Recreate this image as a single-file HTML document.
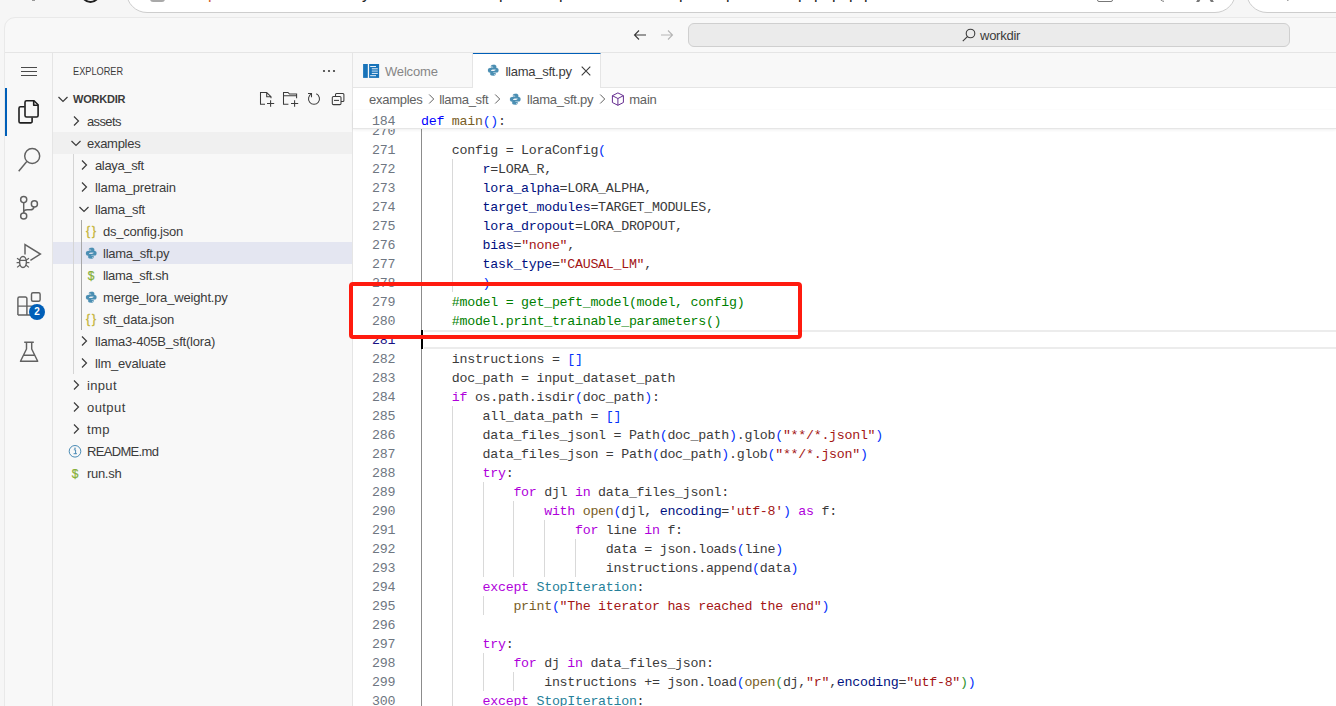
<!DOCTYPE html>
<html lang="en">
<head>
<meta charset="utf-8">
<title>llama_sft.py - workdir</title>
<style>
*{box-sizing:border-box}
html,body{margin:0;padding:0}
body{width:1336px;height:706px;overflow:hidden;position:relative;background:#f6f6f6;font-family:"Liberation Sans",sans-serif;font-size:13px;color:#3b3b3b}
.abs{position:absolute}
/* browser chrome remnants */
#chrome{position:absolute;left:0;top:0;width:1336px;height:16px;background:#f6f6f6;overflow:hidden}
#urlpill{position:absolute;left:126px;top:-30px;width:1110px;height:43px;border-radius:21px;background:#fff;border:1px solid #cdcdcd}
#pill2{position:absolute;left:1246px;top:-30px;width:140px;height:43px;border-radius:21px;background:#fff;border:1px solid #cdcdcd}
.urlfrag{position:absolute;top:-15.400px;font-size:16px;line-height:18px;color:#222;white-space:pre}
/* vscode window */
#win{position:absolute;left:4px;top:16.500px;width:1340px;height:700px;background:#f8f8f8;border:1px solid #e9e9e9;border-radius:11px 0 0 0;overflow:hidden}
#root{position:absolute;left:0;top:0;width:1336px;height:706px}
#titleline{position:absolute;left:5px;top:52px;width:1331px;height:1px;background:#e5e5e5}
#cc{position:absolute;left:688px;top:23px;width:602px;height:24px;background:#ebebeb;border:1px solid #cfcfcf;border-radius:6px}
#cctext{position:absolute;left:980px;top:28px;font-size:13px;color:#3b3b3b;line-height:16px;letter-spacing:-.25px}
#actbar{position:absolute;left:6px;top:53px;width:47px;height:653px;background:#f8f8f8}
#actline{position:absolute;left:52.400px;top:53px;width:1px;height:653px;background:#e5e5e5}
#sideline{position:absolute;left:352px;top:53px;width:1px;height:653px;background:#e5e5e5}
#editor{position:absolute;left:353px;top:53px;width:983px;height:653px;background:#fff}
#tabs{position:absolute;left:353px;top:53px;width:983px;height:35px;background:#f8f8f8;border-bottom:1px solid #e5e5e5}
.tab{position:absolute;top:53px;height:35px;border-right:1px solid #e5e5e5;font-size:13px;line-height:35px}
#tab1{left:353px;width:120px;background:#f8f8f8;color:#868686;border-bottom:1px solid #e5e5e5}
#tab2{left:473px;width:128px;background:#fff;color:#3b3b3b;border-top:1px solid #005fb8;line-height:34px}
#crumbs{position:absolute;left:353px;top:88px;width:983px;height:22px;background:#fff;font-size:13px;line-height:22px;color:#616161}
#crumbs span{position:absolute;top:0;white-space:pre}
/* code */
.ln{position:absolute;left:353px;width:42.200px;height:19px;text-align:right;font:13.3px/19px "Liberation Mono",monospace;letter-spacing:-.28px;color:#6e7681;white-space:pre;margin-top:1px}
.ln.cur{color:#171184}
.cl{position:absolute;left:421px;height:19px;font:13.3px/19px "Liberation Mono",monospace;letter-spacing:-.28px;color:#3b3b3b;white-space:pre;margin-top:1px}
.k{color:#0000ff}.c{color:#af00db}.f{color:#795e26}.t{color:#267f99}.v{color:#001080}.s{color:#a31515}.m{color:#008000}
.b1{color:#0431fa}.b2{color:#319331}.b3{color:#7b3814}
.ig{position:absolute;width:1px;background:#d9d9d9}
#aig{position:absolute;left:421px;top:129px;width:1px;height:577px;background:#8c8c8c}
#sticky{position:absolute;left:353px;top:110px;width:983px;height:19px;background:#fff;border-bottom:1px solid #e6e6e6;box-shadow:0 1px 3px rgba(0,0,0,.07)}
#curline{position:absolute;left:424px;top:330px;width:912px;height:19px;border-top:2px solid #ececec;border-bottom:2px solid #ececec}
#cursor{position:absolute;left:421px;top:330px;width:2px;height:19px;background:#000}
#redbox{position:absolute;left:349px;top:282px;width:453px;height:57px;border:4px solid #ff1b0f;border-radius:4px}
/* sidebar */
.tl{position:absolute;height:22px;line-height:22px;font-size:13px;color:#3b3b3b;white-space:pre}
.tw{position:absolute;width:16px;height:16px}
.ico{position:absolute;width:16px;height:22px;line-height:22px;text-align:center;white-space:pre}
.ico svg{margin-top:4px;display:inline-block}
.ico.tx{font-family:"Liberation Sans",sans-serif}
.rowbg{position:absolute;left:53px;width:299px;height:22px}
.tg{position:absolute;width:1px;background:#d5d5d5}
</style>
</head>
<body>
<div id="chrome">
  <div id="urlpill"></div>
  <div id="pill2"></div>
  <!-- reload icon remnant -->
  <div class="abs" style="left:80.800px;top:-16.900px;width:19.400px;height:19.400px;border:2px solid #1f1f1f;border-radius:50%"></div>
  <div class="abs" style="left:32px;top:0;width:3px;height:1px;background:#999"></div>
  <!-- lock / site info remnant -->
  <div class="abs" style="left:150px;top:-10px;width:15px;height:12px;border-radius:3px;background:#a9a9a9"></div>
  <!-- clipped url text: only descenders are visible -->
  <div class="urlfrag" style="left:208px;color:#d2622a">p</div>
  <div class="urlfrag" style="left:362px">y</div>
  <div class="urlfrag" style="left:499px">p</div>
  <div class="urlfrag" style="left:559px">p</div>
  <div class="urlfrag" style="left:679px">p</div>
  <div class="urlfrag" style="left:726px">p</div>
  <div class="urlfrag" style="left:798px">p</div>
  <div class="urlfrag" style="left:814px">p</div>
  <div class="urlfrag" style="left:832px">p</div>
  <div class="urlfrag" style="left:849px">p</div>
  <div class="urlfrag" style="left:864px">p</div>
  <!-- toolbar icon remnants -->
  <div class="abs" style="left:1097px;top:-10px;width:16px;height:12px;border:1.500px solid #777;border-radius:2px"></div>
  <div class="abs" style="left:1158px;top:-12px;width:14px;height:14px;border:1.500px solid #777;border-radius:50%;clip-path:inset(0 8px 0 0)"></div>
  <div class="abs" style="left:1199px;top:-8px;width:3px;height:10px;background:#777;transform:skewX(-30deg)"></div>
  <div class="abs" style="left:1208px;top:-8px;width:3px;height:10px;background:#777;transform:skewX(30deg)"></div>
  <div class="abs" style="left:1283px;top:-12px;width:2px;height:14px;background:#777;transform:rotate(-40deg)"></div>
</div>
<div id="win"></div>
<div id="root">
  <div id="titleline"></div>
  <!-- nav arrows -->
  <svg class="abs" style="left:632px;top:27px" width="16" height="16" viewBox="0 0 16 16"><path d="M14 8H2.500M7 3.500L2.500 8 7 12.500" fill="none" stroke="#3b3b3b" stroke-width="1.100"/></svg>
  <svg class="abs" style="left:659px;top:27px" width="16" height="16" viewBox="0 0 16 16"><path d="M2 8h11.500M9 3.500L13.500 8 9 12.500" fill="none" stroke="#b5b5b5" stroke-width="1.100"/></svg>
  <div id="cc"></div>
  <svg class="abs" style="left:961px;top:27px" width="16" height="16" viewBox="0 0 16 16"><circle cx="9.500" cy="6.500" r="4.300" fill="none" stroke="#3b3b3b" stroke-width="1.100"/><path d="M6.400 9.600L1.800 14.200" stroke="#3b3b3b" stroke-width="1.100"/></svg>
  <div id="cctext">workdir</div>

  <div id="actline"></div>
  <div id="sideline"></div>
    <!-- activity bar -->
  <div class="abs" style="left:5px;top:88px;width:2px;height:48px;background:#005fb8"></div>
  <svg class="abs" style="left:0;top:53px" width="54" height="400" viewBox="0 53 54 400" fill="none" stroke="#616161" stroke-width="1.450" stroke-linecap="butt" stroke-linejoin="round">
    <!-- menu -->
    <path d="M21 67.500H37M21 71.500H37M21 75.500H37" stroke="#4a4a4a" stroke-width="1"/>
    <!-- explorer (active) -->
    <g stroke="#1f1f1f" stroke-width="1.600">
      <path d="M26.500 100.700H34L38.100 104.800V115.500a1.500 1.500 0 0 1-1.500 1.500H26.500a1.500 1.500 0 0 1-1.500-1.500V102.200a1.500 1.500 0 0 1 1.500-1.500z"/>
      <path d="M33.700 100.700V105.200H38.100"/>
      <path d="M24.600 106.700H20.500a1.500 1.500 0 0 0-1.500 1.500V121.400a1.500 1.500 0 0 0 1.500 1.500H30.600a1.500 1.500 0 0 0 1.500-1.500V117.400"/>
    </g>
    <!-- search -->
    <circle cx="32.200" cy="156" r="7.500"/>
    <path d="M26.800 161.500L18.700 171.300"/>
    <!-- source control -->
    <circle cx="23.700" cy="199.600" r="3.050"/>
    <circle cx="23.700" cy="216" r="3.050"/>
    <circle cx="34.400" cy="203.900" r="3.050"/>
    <path d="M23.700 202.700V212.900M34 207c-.4 1.800-1.600 2.800-3.500 2.800H27.200c-1.700 0-3.500 .9-3.500 2.800"/>
    <!-- run and debug -->
    <path d="M25 254.600V244.600L40.400 254.100L30.400 260.300" stroke-linejoin="miter"/>
    <ellipse cx="23" cy="262" rx="3.400" ry="5.500"/>
    <path d="M19.800 260.400H26.200M17 258.300L20 260.300M29 258.300L26 260.300M16.600 262.600H19.600M29.400 262.600H26.400M17.100 267.400L20.100 265M28.900 267.400L25.900 265" stroke-width="1.200"/>
    <!-- extensions -->
    <path d="M17.900 315V298.500a1.500 1.500 0 0 1 1.500-1.500H25.400a1.500 1.500 0 0 1 1.500 1.500V315M17.200 306.100H36M17.900 315H36"/>
    <rect x="31.500" y="292.700" width="8.600" height="8.600" rx="1.500"/>
    <!-- testing flask -->
    <path d="M24.200 342.300H33.800M26.500 342.300V349L20.500 361.300H37.700L31.700 349V342.300M23.400 355.200H34.800"/>
  </svg>
  <div class="abs" style="left:29px;top:304px;width:16px;height:16px;border-radius:8px;background:#005fb8;color:#fff;font:bold 10px/16px 'Liberation Sans',sans-serif;text-align:center">2</div>

    <!-- sidebar -->
  <div class="rowbg" style="top:132px;background:#f0f0f0"></div>
  <div class="rowbg" style="top:242px;background:#e4e6f1"></div>
  <div class="abs" style="left:73px;top:62px;font-size:11px;line-height:18px;color:#3b3b3b;transform-origin:0 50%;transform:scaleX(.835);white-space:pre">EXPLORER</div>
  <svg class="abs" style="left:321px;top:63px" width="16" height="16" viewBox="0 0 16 16" fill="#3b3b3b"><circle cx="3" cy="8" r="1.100"/><circle cx="8" cy="8" r="1.100"/><circle cx="13" cy="8" r="1.100"/></svg>
  <div class="tw" style="left:55px;top:91px"><svg viewBox="0 0 16 16" width="16" height="16"><path d="M3.500 6l4.500 4.500L12.500 6" fill="none" stroke="#3b3b3b" stroke-width="1.200"/></svg></div>
  <div class="abs" style="left:73px;top:88px;font-size:11px;font-weight:bold;line-height:22px;color:#3b3b3b;letter-spacing:-.22px;white-space:pre">WORKDIR</div>
  <div class="tg" style="left:73px;top:154px;height:220px"></div>
  <div class="tg" style="left:81px;top:220px;height:110px;background:#a8a8a8"></div>
  <!-- explorer header actions: new file, new folder, refresh, collapse all -->
  <svg class="abs" style="left:255px;top:85px" width="95" height="27" viewBox="255 85 95 27" fill="none" stroke="#3b3b3b" stroke-width="1.050">
    <path d="M265 104.200H260.500V92.500H266.700L271 96.700V98.200M266.700 92.500V96.700H271M267 103.500H274.200M270.600 100.200V106.800"/>
    <path d="M288.400 104.200H283.500V92.500H288L289.500 94H296.600V98.200M283.500 95.800H296.600M291 103.500H298.200M294.600 100.200V106.800"/>
    <path d="M316.300 93.800A5.500 5.500 0 1 1 311.700 93.800M308 93.500H311.500V97.200"/>
    <path d="M335.500 96.400V94.400a1 1 0 0 1 1-1H342.900a1 1 0 0 1 1 1V100.400a1 1 0 0 1-1 1H341"/>
    <rect x="332.300" y="96.400" width="8.700" height="8.200" rx="1.200"/>
    <path d="M334 100.400H339"/>
  </svg>
<div class="tw" style="left:68px;top:113px"><svg viewBox="0 0 16 16" width="16" height="16"><path d="M6 3.500l4.500 4.500L6 12.500" fill="none" stroke="#3b3b3b" stroke-width="1.200"/></svg></div>
<div class="tl" style="left:87px;top:111px;letter-spacing:-0.629px">assets</div>
<div class="tw" style="left:68px;top:135px"><svg viewBox="0 0 16 16" width="16" height="16"><path d="M3.500 6l4.500 4.500L12.500 6" fill="none" stroke="#3b3b3b" stroke-width="1.200"/></svg></div>
<div class="tl" style="left:87px;top:133px;letter-spacing:-0.279px">examples</div>
<div class="tw" style="left:76px;top:157px"><svg viewBox="0 0 16 16" width="16" height="16"><path d="M6 3.500l4.500 4.500L6 12.500" fill="none" stroke="#3b3b3b" stroke-width="1.200"/></svg></div>
<div class="tl" style="left:95px;top:155px;letter-spacing:-0.359px">alaya_sft</div>
<div class="tw" style="left:76px;top:179px"><svg viewBox="0 0 16 16" width="16" height="16"><path d="M6 3.500l4.500 4.500L6 12.500" fill="none" stroke="#3b3b3b" stroke-width="1.200"/></svg></div>
<div class="tl" style="left:95px;top:177px;letter-spacing:-0.098px">llama_pretrain</div>
<div class="tw" style="left:76px;top:201px"><svg viewBox="0 0 16 16" width="16" height="16"><path d="M3.500 6l4.500 4.500L12.500 6" fill="none" stroke="#3b3b3b" stroke-width="1.200"/></svg></div>
<div class="tl" style="left:95px;top:199px;letter-spacing:-0.235px">llama_sft</div>
<div class="ico tx" style="left:83px;top:220px;color:#c6b53a;font-size:12px;letter-spacing:2px;text-indent:2px;-webkit-text-stroke:.35px #c6b53a">{}</div>
<div class="tl" style="left:103px;top:221px;letter-spacing:-0.222px">ds_config.json</div>
<div class="abs" style="left:85.05px;top:246.95px;width:12.500px;height:12.500px"><svg viewBox="0 0 16 16" width="12.500" height="12.500" fill="#4b8fb3" stroke="#4b8fb3" stroke-width=".15" fill-rule="evenodd" style="display:block"><path d="M7.900 1c-2.300 0-2.900 1-2.900 1.900v1.600h3v.5H3.700C2.300 5 1.200 6.100 1.200 8s1 3 2.300 3H5V9.300c0-1.200 1-2.200 2.200-2.200h2.900c1 0 1.800-.8 1.800-1.800V2.900c0-1-.9-1.900-4-1.900zM6.200 2.100a.75.75 0 1 1 0 1.500.75.75 0 0 1 0-1.500z"/><path d="M8.100 15c2.300 0 2.900-1 2.900-1.900v-1.600H8V11h4.300c1.400 0 2.500-1.100 2.500-3s-1-3-2.300-3H11v1.700c0 1.200-1 2.200-2.200 2.200H5.900c-1 0-1.800.8-1.800 1.800v2.400c0 1 .9 1.900 4 1.900zM9.800 13.900a.75.75 0 1 1 0-1.500.75.75 0 0 1 0 1.500z"/></svg></div>
<div class="tl" style="left:103px;top:243px;letter-spacing:-0.255px">llama_sft.py</div>
<div class="ico tx" style="left:83px;top:265px;color:#86b03a;font-size:12px;-webkit-text-stroke:.25px #86b03a">$</div>
<div class="tl" style="left:103px;top:265px;letter-spacing:-0.330px">llama_sft.sh</div>
<div class="abs" style="left:85.05px;top:290.95px;width:12.500px;height:12.500px"><svg viewBox="0 0 16 16" width="12.500" height="12.500" fill="#4b8fb3" stroke="#4b8fb3" stroke-width=".15" fill-rule="evenodd" style="display:block"><path d="M7.900 1c-2.300 0-2.900 1-2.900 1.900v1.600h3v.5H3.700C2.300 5 1.200 6.100 1.200 8s1 3 2.300 3H5V9.300c0-1.200 1-2.200 2.200-2.200h2.900c1 0 1.800-.8 1.800-1.800V2.900c0-1-.9-1.900-4-1.900zM6.200 2.100a.75.75 0 1 1 0 1.500.75.75 0 0 1 0-1.500z"/><path d="M8.100 15c2.300 0 2.900-1 2.900-1.900v-1.600H8V11h4.300c1.400 0 2.500-1.100 2.500-3s-1-3-2.300-3H11v1.700c0 1.200-1 2.200-2.200 2.200H5.900c-1 0-1.800.8-1.800 1.800v2.400c0 1 .9 1.900 4 1.900zM9.800 13.900a.75.75 0 1 1 0-1.500.75.75 0 0 1 0 1.500z"/></svg></div>
<div class="tl" style="left:103px;top:287px;letter-spacing:-0.160px">merge_lora_weight.py</div>
<div class="ico tx" style="left:83px;top:308px;color:#c6b53a;font-size:12px;letter-spacing:2px;text-indent:2px;-webkit-text-stroke:.35px #c6b53a">{}</div>
<div class="tl" style="left:103px;top:309px;letter-spacing:-0.209px">sft_data.json</div>
<div class="tw" style="left:76px;top:333px"><svg viewBox="0 0 16 16" width="16" height="16"><path d="M6 3.500l4.500 4.500L6 12.500" fill="none" stroke="#3b3b3b" stroke-width="1.200"/></svg></div>
<div class="tl" style="left:95px;top:331px;letter-spacing:-0.199px">llama3-405B_sft(lora)</div>
<div class="tw" style="left:76px;top:355px"><svg viewBox="0 0 16 16" width="16" height="16"><path d="M6 3.500l4.500 4.500L6 12.500" fill="none" stroke="#3b3b3b" stroke-width="1.200"/></svg></div>
<div class="tl" style="left:95px;top:353px;letter-spacing:-0.190px">llm_evaluate</div>
<div class="tw" style="left:68px;top:377px"><svg viewBox="0 0 16 16" width="16" height="16"><path d="M6 3.500l4.500 4.500L6 12.500" fill="none" stroke="#3b3b3b" stroke-width="1.200"/></svg></div>
<div class="tl" style="left:87px;top:375px;letter-spacing:0.342px">input</div>
<div class="tw" style="left:68px;top:399px"><svg viewBox="0 0 16 16" width="16" height="16"><path d="M6 3.500l4.500 4.500L6 12.500" fill="none" stroke="#3b3b3b" stroke-width="1.200"/></svg></div>
<div class="tl" style="left:87px;top:397px;letter-spacing:0.426px">output</div>
<div class="tw" style="left:68px;top:421px"><svg viewBox="0 0 16 16" width="16" height="16"><path d="M6 3.500l4.500 4.500L6 12.500" fill="none" stroke="#3b3b3b" stroke-width="1.200"/></svg></div>
<div class="tl" style="left:87px;top:419px;letter-spacing:0.376px">tmp</div>
<div class="abs" style="left:68px;top:444px;width:14px;height:14px"><svg viewBox="0 0 14 14" width="14" height="14"><circle cx="7" cy="7.300" r="5.800" fill="none" stroke="#4a8bb5" stroke-width="1"/><path d="M5.800 5.800h1.800v3.800h1M5.600 9.700h3" fill="none" stroke="#4a8bb5" stroke-width="1"/><circle cx="7" cy="4.300" r=".8" fill="#4a8bb5"/></svg></div>
<div class="tl" style="left:87px;top:441px;letter-spacing:-0.676px">README.md</div>
<div class="ico tx" style="left:67px;top:463px;color:#86b03a;font-size:12px;-webkit-text-stroke:.25px #86b03a">$</div>
<div class="tl" style="left:87px;top:463px;letter-spacing:-0.305px">run.sh</div>
  <div id="editor"></div>
  <div id="tabs"></div>
  <div class="tab" id="tab1"><span class="abs" style="left:32px;top:1px;letter-spacing:-.18px">Welcome</span></div>
  <div class="tab" id="tab2"><span class="abs" style="left:32.500px;top:1px;letter-spacing:-.27px">llama_sft.py</span></div>
    <!-- welcome icon -->
  <svg class="abs" style="left:363px;top:64px" width="17" height="14" viewBox="363 64 17 14"><rect x="363.100" y="64" width="4.700" height="13.900" fill="#1873b9"/><rect x="369.100" y="64" width="10" height="13.900" fill="#1873b9"/><path d="M370.200 66.500h5.800M371.800 68.800h6M371.800 73.400h6M370.200 75.700h5.800" stroke="#e8f1f9" stroke-width="1"/><path d="M371.800 71.100h6" stroke="#9cc4e4" stroke-width="1.400"/></svg>
  <!-- python icon tab -->
  <svg class="abs" style="left:486.950px;top:63.550px" width="12.500" height="12.500" viewBox="0 0 16 16" fill="#4b8fb3" stroke="#4b8fb3" stroke-width=".15" fill-rule="evenodd"><path d="M7.900 1c-2.300 0-2.900 1-2.900 1.900v1.600h3v.5H3.700C2.300 5 1.200 6.100 1.200 8s1 3 2.300 3H5V9.300c0-1.200 1-2.200 2.200-2.200h2.900c1 0 1.800-.8 1.800-1.800V2.900c0-1-.9-1.900-4-1.900zM6.200 2.100a.75.75 0 1 1 0 1.500.75.75 0 0 1 0-1.500z"/><path d="M8.100 15c2.300 0 2.900-1 2.900-1.900v-1.600H8V11h4.300c1.400 0 2.500-1.100 2.500-3s-1-3-2.300-3H11v1.700c0 1.200-1 2.200-2.200 2.200H5.900c-1 0-1.800.8-1.800 1.800v2.400c0 1 .9 1.900 4 1.900zM9.800 13.900a.75.75 0 1 1 0-1.500.75.750 0 0 1 0 1.500z"/></svg>
  <!-- close -->
  <svg class="abs" style="left:578px;top:63px" width="16" height="16" viewBox="0 0 16 16"><path d="M3.700 3.700l8.600 8.600M12.300 3.700l-8.600 8.600" stroke="#3b3b3b" stroke-width="1.100" fill="none"/></svg>

  <div id="crumbs">
    <span style="left:16px;top:1px;letter-spacing:-.27px">examples</span>
    <span style="left:86.200px;top:1px;letter-spacing:-.32px">llama_sft</span>
    <span style="left:174.100px;top:1px;letter-spacing:-.27px">llama_sft.py</span>
    <span style="left:276.200px;top:1px;letter-spacing:-.17px">main</span>
  </div>
    <svg class="abs" style="left:425px;top:91px" width="16" height="16" viewBox="0 0 16 16"><path d="M4.200 3.500l4.500 4.500-4.500 4.500" fill="none" stroke="#616161" stroke-width="1"/></svg>
  <svg class="abs" style="left:491px;top:91px" width="16" height="16" viewBox="0 0 16 16"><path d="M4.200 3.500l4.500 4.500-4.500 4.500" fill="none" stroke="#616161" stroke-width="1"/></svg>
  <svg class="abs" style="left:596px;top:91px" width="16" height="16" viewBox="0 0 16 16"><path d="M4.200 3.500l4.500 4.500-4.500 4.500" fill="none" stroke="#616161" stroke-width="1"/></svg>
  <svg class="abs" style="left:508.850px;top:93.350px" width="12.500" height="12.500" viewBox="0 0 16 16" fill="#4b8fb3" stroke="#4b8fb3" stroke-width=".15" fill-rule="evenodd"><path d="M7.900 1c-2.300 0-2.900 1-2.900 1.900v1.600h3v.5H3.700C2.300 5 1.200 6.100 1.200 8s1 3 2.300 3H5V9.300c0-1.200 1-2.200 2.200-2.200h2.900c1 0 1.800-.8 1.800-1.800V2.900c0-1-.9-1.900-4-1.900zM6.200 2.100a.75.75 0 1 1 0 1.500.75.75 0 0 1 0-1.500z"/><path d="M8.100 15c2.300 0 2.900-1 2.900-1.900v-1.600H8V11h4.300c1.400 0 2.500-1.100 2.500-3s-1-3-2.300-3H11v1.700c0 1.200-1 2.200-2.200 2.200H5.900c-1 0-1.800.8-1.800 1.800v2.400c0 1 .9 1.900 4 1.900zM9.800 13.900a.75.75 0 1 1 0-1.500.75.750 0 0 1 0 1.500z"/></svg>
  <!-- cube (symbol-method) -->
  <svg class="abs" style="left:610px;top:91px" width="16" height="16" viewBox="610 91 16 16" fill="none" stroke="#652d90" stroke-width="1" stroke-linejoin="round"><path d="M617.900 92.900l5.500 2.800v6.800l-5.500 2.800-5.500-2.800v-6.800zM612.400 95.700l5.500 2.800 5.500-2.800M617.900 98.500v6.800"/></svg>

  <div id="aig"></div>
  <div class="ig" style="left:451.8px;top:159px;height:133px"></div>
<div class="ig" style="left:451.8px;top:406px;height:304px"></div>
<div class="ig" style="left:482.6px;top:482px;height:95px"></div>
<div class="ig" style="left:513.4px;top:501px;height:76px"></div>
<div class="ig" style="left:544.2px;top:520px;height:57px"></div>
<div class="ig" style="left:575.0px;top:539px;height:38px"></div>
<div class="ig" style="left:482.6px;top:596px;height:19px"></div>
<div class="ig" style="left:482.6px;top:653px;height:38px"></div>
<div class="ig" style="left:513.4px;top:672px;height:19px"></div>
<div class="ln" style="top:121px">270</div>
<div class="ln" style="top:140px">271</div>
<div class="cl" style="top:140px">    config = LoraConfig<span class="b1">(</span></div>
<div class="ln" style="top:159px">272</div>
<div class="cl" style="top:159px">        <span class="v">r</span>=LORA_R,</div>
<div class="ln" style="top:178px">273</div>
<div class="cl" style="top:178px">        <span class="v">lora_alpha</span>=LORA_ALPHA,</div>
<div class="ln" style="top:197px">274</div>
<div class="cl" style="top:197px">        <span class="v">target_modules</span>=TARGET_MODULES,</div>
<div class="ln" style="top:216px">275</div>
<div class="cl" style="top:216px">        <span class="v">lora_dropout</span>=LORA_DROPOUT,</div>
<div class="ln" style="top:235px">276</div>
<div class="cl" style="top:235px">        <span class="v">bias</span>=<span class="s">"none"</span>,</div>
<div class="ln" style="top:254px">277</div>
<div class="cl" style="top:254px">        <span class="v">task_type</span>=<span class="s">"CAUSAL_LM"</span>,</div>
<div class="ln" style="top:273px">278</div>
<div class="cl" style="top:273px">        <span class="b1">)</span></div>
<div class="ln" style="top:292px">279</div>
<div class="cl" style="top:292px">    <span class="m">#model = get_peft_model(model, config)</span></div>
<div class="ln" style="top:311px">280</div>
<div class="cl" style="top:311px">    <span class="m">#model.print_trainable_parameters()</span></div>
<div class="ln cur" style="top:330px">281</div>
<div class="ln" style="top:349px">282</div>
<div class="cl" style="top:349px">    instructions = <span class="b1">[]</span></div>
<div class="ln" style="top:368px">283</div>
<div class="cl" style="top:368px">    doc_path = input_dataset_path</div>
<div class="ln" style="top:387px">284</div>
<div class="cl" style="top:387px">    <span class="c">if</span> os.path.isdir<span class="b1">(</span>doc_path<span class="b1">)</span>:</div>
<div class="ln" style="top:406px">285</div>
<div class="cl" style="top:406px">        all_data_path = <span class="b1">[]</span></div>
<div class="ln" style="top:425px">286</div>
<div class="cl" style="top:425px">        data_files_jsonl = Path<span class="b1">(</span>doc_path<span class="b1">)</span>.glob<span class="b1">(</span><span class="s">"**/*.jsonl"</span><span class="b1">)</span></div>
<div class="ln" style="top:444px">287</div>
<div class="cl" style="top:444px">        data_files_json = Path<span class="b1">(</span>doc_path<span class="b1">)</span>.glob<span class="b1">(</span><span class="s">"**/*.json"</span><span class="b1">)</span></div>
<div class="ln" style="top:463px">288</div>
<div class="cl" style="top:463px">        <span class="c">try</span>:</div>
<div class="ln" style="top:482px">289</div>
<div class="cl" style="top:482px">            <span class="c">for</span> djl <span class="c">in</span> data_files_jsonl:</div>
<div class="ln" style="top:501px">290</div>
<div class="cl" style="top:501px">                <span class="c">with</span> <span class="f">open</span><span class="b1">(</span>djl, <span class="v">encoding</span>=<span class="s">'utf-8'</span><span class="b1">)</span> <span class="c">as</span> f:</div>
<div class="ln" style="top:520px">291</div>
<div class="cl" style="top:520px">                    <span class="c">for</span> line <span class="c">in</span> f:</div>
<div class="ln" style="top:539px">292</div>
<div class="cl" style="top:539px">                        data = json.loads<span class="b1">(</span>line<span class="b1">)</span></div>
<div class="ln" style="top:558px">293</div>
<div class="cl" style="top:558px">                        instructions.append<span class="b1">(</span>data<span class="b1">)</span></div>
<div class="ln" style="top:577px">294</div>
<div class="cl" style="top:577px">        <span class="c">except</span> <span class="t">StopIteration</span>:</div>
<div class="ln" style="top:596px">295</div>
<div class="cl" style="top:596px">            <span class="f">print</span><span class="b1">(</span><span class="s">"The iterator has reached the end"</span><span class="b1">)</span></div>
<div class="ln" style="top:615px">296</div>
<div class="ln" style="top:634px">297</div>
<div class="cl" style="top:634px">        <span class="c">try</span>:</div>
<div class="ln" style="top:653px">298</div>
<div class="cl" style="top:653px">            <span class="c">for</span> dj <span class="c">in</span> data_files_json:</div>
<div class="ln" style="top:672px">299</div>
<div class="cl" style="top:672px">                instructions += json.load<span class="b1">(</span><span class="f">open</span><span class="b2">(</span>dj,<span class="s">"r"</span>,<span class="v">encoding</span>=<span class="s">"utf-8"</span><span class="b2">)</span><span class="b1">)</span></div>
<div class="ln" style="top:691px">300</div>
<div class="cl" style="top:691px">        <span class="c">except</span> <span class="t">StopIteration</span>:</div>
  <div id="sticky"></div>
  <div class="ln" style="top:111px">184</div>
  <div class="cl" style="top:111px"><span class="k">def</span> <span class="f">main</span><span class="b1">()</span>:</div>
  <div id="curline"></div>
  <div id="cursor"></div>
  <div id="redbox"></div>
</div>
</body>
</html>
